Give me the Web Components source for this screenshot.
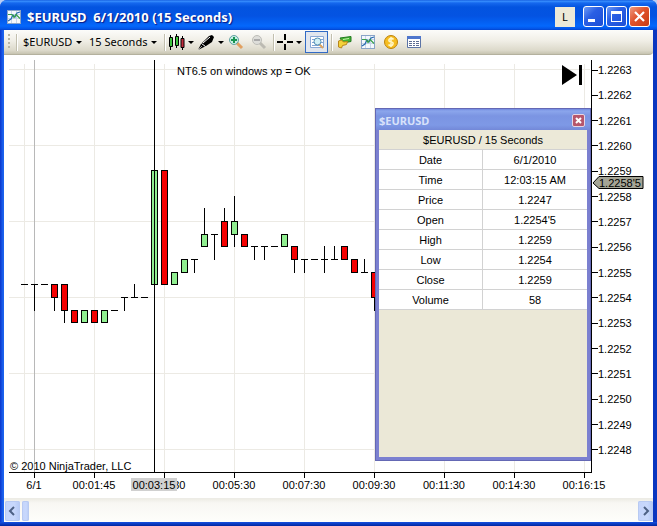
<!DOCTYPE html>
<html lang="en">
<head>
<meta charset="utf-8">
<title>$EURUSD 6/1/2010 (15 Seconds)</title>
<style>
html, body { margin: 0; height: 100%; }
body { background: #b9cdf5; font: 11px/14px "Liberation Sans", Arial, sans-serif; color: #000; }
</style>
</head>
<body>
<chart-window></chart-window>
<script>
class BaseElement extends HTMLElement {
  constructor() {
    super();
    this.attachShadow({ mode: 'open' }).innerHTML = '<style>*{box-sizing:border-box}button{font:inherit;color:inherit;margin:0;padding:0;border:0;background:none}svg{display:block;flex:none}</style>' + this.template();
  }
}

const chartIcon = `<svg width="14" height="14" viewBox="0 0 14 14"><rect x=".5" y=".5" width="13" height="13" fill="#f4f8fc" stroke="#8aa4c8"/><path d="M1 4.500h12M1 8.500h12M4.500 1v12M9.500 1v12" stroke="#c6d6ea"/><path d="M1 11l3-2 2-4 2 2 2-4 3-1" fill="none" stroke="#2468b0" stroke-width="1.200"/><path d="M1 4.500h4l2 3 2-3 4 4" fill="none" stroke="#38a048" stroke-width="1.200"/></svg>`;

customElements.define('title-bar', class extends BaseElement {
  template() {
    return `<style>
    :host{display:flex;align-items:center;height:30px;padding:3px 7px 0 7px;gap:6px;
      background:linear-gradient(#0a4fd8 0,#3b93ff 1px,#1568ee 3px,#0354e0 7px,#0453e2 16px,#0468fc 26px,#0353e6 29px,#0341c8 30px);
      border-radius:7px 7px 0 0;color:#fff}
    h1{flex:1;margin:0;white-space:pre;font:bold 13px/18px "Noto Sans",sans-serif;text-shadow:1px 1px 1px #0a1883}
    .link{width:20px;height:20px;background:#ece9d8;color:#000;font:11px/20px "Noto Sans",sans-serif;margin-right:2px}
    .group{display:flex;gap:2px}
    .group button{width:21px;height:21px;border:1px solid #fff;border-radius:3px;background:linear-gradient(135deg,#6d9bf5,#2a5fe4 40%,#1c4ed6)}
    .group .close{background:linear-gradient(135deg,#ee9a80,#e0532c 45%,#c83c14)}
    </style>
    ${chartIcon}<h1>$EURUSD  6/1/2010 (15 Seconds)</h1>
    <button class="link">L</button>
    <div class="group">
      <button aria-label="Minimize"><svg width="19" height="19"><path d="M4 12h7v3H4z" fill="#fff"/></svg></button>
      <button aria-label="Maximize"><svg width="19" height="19"><path d="M4 4h11v11H4zM5 7v7h9V7z" fill="#fff" fill-rule="evenodd"/></svg></button>
      <button class="close" aria-label="Close"><svg width="19" height="19"><path d="M5 5l9 9M14 5l-9 9" stroke="#fff" stroke-width="2.200"/></svg></button>
    </div>`;
  }
});

customElements.define('tool-bar', class extends BaseElement {
  template() {
    return `<style>
    :host{display:flex;align-items:center;height:25px;padding:0 4px;
      background:linear-gradient(#fcfcfa,#f0eee6 45%,#dcd9ca 85%,#c6c3b0);border-bottom:1px solid #b4b19e;border-radius:0 0 4px 0;
      font:11px/14px "Noto Sans",sans-serif}
    .grip{width:2px;height:16px;background:repeating-linear-gradient(#b8b5a4 0 2px,transparent 2px 4px);margin-right:6px}
    .sep{width:2px;height:17px;border-left:1px solid #c2bfae;border-right:1px solid #fff}
    .sep.wide{margin:0 2px 0 7px}.sep.mid{margin:0 2px 0 3px}
    button{display:flex;align-items:center;justify-content:center;height:23px;white-space:nowrap}
    .menu{justify-content:space-between}
    .menu::after{content:"";border:3px solid transparent;border-top-color:#000;border-bottom:0;width:0}
    .sym{margin-left:5px;width:59px}.per{margin-left:7px;width:68px}
    .style{width:26px}.draw{width:27px;margin-left:3px}.cross{width:25px}
    .icon{width:23px}
    .on{background:#e1e6ee;border:1px solid #316ac5;height:22px;margin:0 3px}
    </style>
    <span class="grip"></span><span class="sep"></span>
    <button class="menu sym">$EURUSD</button>
    <button class="menu per">15 Seconds</button>
    <span class="sep wide"></span>
    <button class="menu style" aria-label="Chart style"><svg width="17" height="17"><g stroke="#000"><path d="M2.500 1v15M8.500 0v14M14.500 2v14"/><path d="M1.500 3.500h3v9h-3zM7.500 2.500h3v9h-3z" fill="#3ec43e"/><path d="M13 4.500h3v9h-3z" fill="#c22c3c"/></g></svg></button>
    <button class="menu draw" aria-label="Drawing tools"><svg width="19" height="17"><path d="M1 16l3-6 8-8 3-1 2 2-2 5-6 4z"/><path d="M4.500 9.500l4 3M6 9l7-6" stroke="#fff"/><path d="M1 16l4-4" stroke="#fff" stroke-width=".600"/></svg></button>
    <button class="icon" aria-label="Zoom in"><svg width="16" height="16"><path d="M9 9l5 5" stroke="#e2a060" stroke-width="3"/><circle cx="6" cy="6" r="4.500" fill="#c9eee4" stroke="#62a2a4"/><path d="M6 3v6M3 6h6" stroke="#179452" stroke-width="2"/></svg></button>
    <button class="icon" aria-label="Zoom out"><svg width="16" height="16"><path d="M9 9l5 5" stroke="#bcbab2" stroke-width="3"/><circle cx="6" cy="6" r="4.500" fill="#dededa" stroke="#bdbdb8"/><path d="M3 6h6" stroke="#aaa" stroke-width="2"/></svg></button>
    <span class="sep mid"></span>
    <button class="menu cross" aria-label="Cross hair"><svg width="17" height="17"><path d="M8 0v6M8 10v6M0 8h6M10 8h6" stroke="#000" stroke-width="2"/></svg></button>
    <button class="icon on" aria-label="Data box"><svg width="16" height="16"><path d="M1.500 2.500h13v11h-13z" fill="#fff" stroke="#8aa9d6"/><path d="M3 5.500h4M3 8.500h3M3 11.500h10M12 5.500h2M12 8.500h2" stroke="#82a4d4"/><path d="M10 10l4 4" stroke="#e0a45c" stroke-width="2"/><circle cx="8.500" cy="7.500" r="3.500" fill="#d2f0f6" stroke="#5690b4"/></svg></button>
    <span class="sep"></span>
    <button class="icon" aria-label="Strategies"><svg width="16" height="16"><path d="M3 4l11-1.500v5L6 9z" fill="#44b434" stroke="#227a20"/><path d="M6 5.500l6-1" stroke="#c6f4ac"/><path d="M1.500 7l3-1 2 2 4-.500-1 3-4 1-1 2.500-3-1z" fill="#f4d23a" stroke="#b8861c"/></svg></button>
    <button class="icon" aria-label="Indicators">${chartIcon}</button>
    <button class="icon" aria-label="Account"><svg width="16" height="16"><circle cx="8" cy="8" r="6.500" fill="#f6bd21" stroke="#bd830c"/><path d="M10.500 5.500Q9.500 4 7.500 4.500T6 7q1 1 3 1.300T9.500 11Q7 12.500 5.500 10.500M8 3v10" fill="none" stroke="#fff7c9" stroke-width="1.500"/></svg></button>
    <button class="icon" aria-label="Properties"><svg width="16" height="16"><path d="M1.500 2.500h13v11h-13z" fill="#fff" stroke="#5c74a6"/><path d="M1 3.500h14" stroke="#4f76cc" stroke-width="3"/><path d="M3 7.500h3M3 9.500h3M3 11.500h3M7 7.500h2M10 7.500h3M7 9.500h2M10 9.500h3M7 11.500h2M10 11.500h3" stroke="#5d6c92"/></svg></button>`;
  }
});

/* Price levels are y coordinates; each bar is [open/close top, bottom, high, low, colour]. */
const G = '#90ee90', R = '#f40000';
const bars = [
  [284],[284,284,284,310],[284],[284,297,284,310,R],[284,310,284,322,R],[310,322,310,322,R],[310,322,310,322,G],
  [310,322,310,322,R],[310,322,310,322,G],[310],[297,297,297,310],[297,297,284,297],[297],[170,284,170,284,G],
  [170,284,170,284,R],[272,284,272,284,G],[259,272,259,272,G],[259,259,259,272],[234,246,208,246,G],[234,234,234,259],
  [221,246,208,246,R],[221,234,196,246,G],[234,246,234,246,R],[246,246,246,259],[246,246,246,259],[246],
  [234,246,234,246,G],[246,259,246,272,R],[259,259,259,272],[259],[259,259,246,272],[259,259,246,259],
  [246,259,246,259,R],[259,272,259,272,R],[272,272,259,272],[272,297,272,310,R]
];

customElements.define('price-plot', class extends BaseElement {
  template() {
    const cols = [24, 94, 164, 234, 304, 374, 444, 514, 584].map(x => `M${x}.500 64V472`).join('');
    const rows = [69, 145, 221, 297, 373, 449].map(y => `M9 ${y}.500H590`).join('');
    const candles = bars.map(([t, b = t, h = t, l = b, c], i) => {
      const x = 24.5 + i * 10;
      return `<path d="M${x} ${h}V${l + 1}"/>` + (c
        ? `<rect x="${x - 3}" y="${t + .5}" width="6" height="${b - t}" fill="${c}"/>`
        : `<path d="M${x - 3.5} ${t + .5}h7"/>`);
    }).join('');
    return `<style>
    :host{display:block;position:relative;min-width:0;min-height:0}
    svg.plot{width:100%;height:100%}
    p{position:absolute;margin:0;white-space:nowrap}
    .note{left:168px;top:4px}.copy{left:1px;bottom:-1px}
    button{position:absolute;right:8px;top:5px}
    </style>
    <svg class="plot" viewBox="9 60 582 412" preserveAspectRatio="none">
      <path d="${cols}${rows}" stroke="#eceae4"/><path d="M34.500 60V472" stroke="#b8b8b8"/>
      <g stroke="#000">${candles}<path d="M154.500 60V472"/></g>
    </svg>
    <p class="note">NT6.5 on windows xp = OK</p>
    <p class="copy">© 2010 NinjaTrader, LLC</p>
    <button aria-label="Return to last bar"><svg width="22" height="21"><path d="M1 0l15 10L1 20zM18 0h3v20h-3z"/></svg></button>`;
  }
});

customElements.define('price-axis', class extends BaseElement {
  template() {
    const labels = Array.from({ length: 16 }, (_, i) => `<span>${(1.2263 - i / 10000).toFixed(4)}</span>`).join('');
    return `<style>
    :host{display:flex;position:relative;flex-direction:column;justify-content:space-between;padding:3px 0 16px;border-left:1px solid #000}
    span{display:flex;align-items:center;height:14px}
    span::before{content:"";width:6px;height:1px;background:#000}
    .tag{position:absolute;left:0;top:116px}
    .tag b{position:absolute;left:7px;top:0;font-weight:normal}
    </style>${labels}
    <div class="tag"><svg width="52" height="14"><path d="M1 7l6-6.500h44v12H7z" fill="#a5a596" stroke="#000"/></svg><b>1.2258'5</b></div>`;
  }
});

customElements.define('time-axis', class extends BaseElement {
  template() {
    const t = ['6/1', '00:01:45', '00:03:30', '00:05:30', '00:07:30', '00:09:30', '00:11:30', '00:14:30', '00:16:15'];
    return `<style>
    :host{display:grid;position:relative;grid-template-columns:50fr repeat(8,70fr);margin-right:34px}
    span{display:flex;flex-direction:column;align-items:center}
    span::before{content:"";width:1px;height:5px;background:#000;margin-left:1px}
    span:first-child::before{box-shadow:-10px 0 #000}
    mark{position:absolute;left:122px;top:5px;width:46px;background:#d0d0d0;color:#000;text-align:center;line-height:14px;height:13px}
    </style>${t.map(s => `<span>${s}</span>`).join('')}<mark>00:03:15</mark>`;
  }
});

customElements.define('data-box', class extends BaseElement {
  template() {
    const rows = [['Date', '6/1/2010'], ['Time', '12:03:15 AM'], ['Price', '1.2247'], ['Open', "1.2254'5"], ['High', '1.2259'], ['Low', '1.2254'], ['Close', '1.2259'], ['Volume', '58']];
    return `<style>
    :host{display:flex;flex-direction:column;background:#ebe8d7;border:4px solid #7b80d0;border-top:0;outline:1px solid #6468b4;outline-offset:-1px}
    header{display:flex;align-items:center;justify-content:space-between;height:22px;margin:0 -4px;padding:3px 5px 0 3px;background:linear-gradient(#6478d8 0,#8ba6ec 3px,#7b94e2 8px,#7e99e6 17px,#7388d8);border:solid #6468b4;border-width:0 1px;
      color:#d8e2fa;font:bold 11px/14px "Noto Sans",sans-serif}
    button{width:13px;height:13px;border:1px solid #e6d5e4;border-radius:2px;background:#b6566c}
    table{width:100%;border-collapse:separate;border-spacing:0;table-layout:fixed;text-align:center;background:#fff}
    th,td{height:20px;padding:0;font-weight:normal;border-bottom:1px solid #d2d2d2}
    tbody th{border-right:1px solid #d2d2d2}
    thead th{background:#ece9d8}
    </style>
    <header>$EURUSD<button aria-label="Close data box"><svg width="11" height="11"><path d="M3 3l5 5M8 3l-5 5" stroke="#fff" stroke-width="2"/></svg></button></header>
    <table><thead><tr><th colspan="2">$EURUSD / 15 Seconds</th></tr></thead>
    <tbody>${rows.map(([a, b]) => `<tr><th scope="row">${a}</th><td>${b}</td></tr>`).join('')}</tbody></table>`;
  }
});

customElements.define('scroll-strip', class extends BaseElement {
  template() {
    return `<style>
    :host{display:flex;height:24px;padding:2px 0 1px 1px;gap:2px;background:linear-gradient(#eeede5,#f8f7f3 4px,#fefefb);border-top:1px solid #edece6}
    button,.thumb{border-radius:2px;background:linear-gradient(90deg,#c4d4fc,#c8d8fc 60%,#b4c8f4);box-shadow:inset 0 0 0 1px #b8caf2}
    button{width:15px;display:grid;place-items:center}
    .track{flex:1;display:flex}.thumb{width:7px}
    </style>
    <button aria-label="Scroll left"><svg width="9" height="10"><path d="M6 1L2 5l4 4" fill="none" stroke="#4d6185" stroke-width="2"/></svg></button>
    <div class="track"><div class="thumb"></div></div>
    <button aria-label="Scroll right"><svg width="9" height="10"><path d="M3 1l4 4-4 4" fill="none" stroke="#4d6185" stroke-width="2"/></svg></button>`;
  }
});

customElements.define('chart-window', class extends BaseElement {
  template() {
    return `<style>
    :host{display:flex;flex-direction:column;height:100vh;background:linear-gradient(90deg,#0a36cc,#1b62ee 3px,#0a50dc 50%,#0a36c0);border-radius:7px 7px 0 0}
    .frame{flex:1;min-height:0;display:flex;flex-direction:column;margin:0 4px;background:#fff}
    .chart{flex:1;min-height:0;position:relative;display:grid;grid-template:minmax(0,1fr) 25px / minmax(0,1fr) 62px;padding:5px 0 0 5px}
    price-plot{border-bottom:1px solid #000}
    time-axis{grid-column:1/3}
    data-box{position:absolute;right:62px;top:53px;bottom:37px;width:216px}
    .edge{height:4px;background:linear-gradient(#1450e0,#0026a0)}
    </style>
    <title-bar></title-bar>
    <div class="frame"><tool-bar></tool-bar>
      <main class="chart"><price-plot></price-plot><price-axis></price-axis><time-axis></time-axis><data-box></data-box></main>
      <scroll-strip></scroll-strip></div>
    <div class="edge"></div>`;
  }
});
</script>
</body>
</html>
